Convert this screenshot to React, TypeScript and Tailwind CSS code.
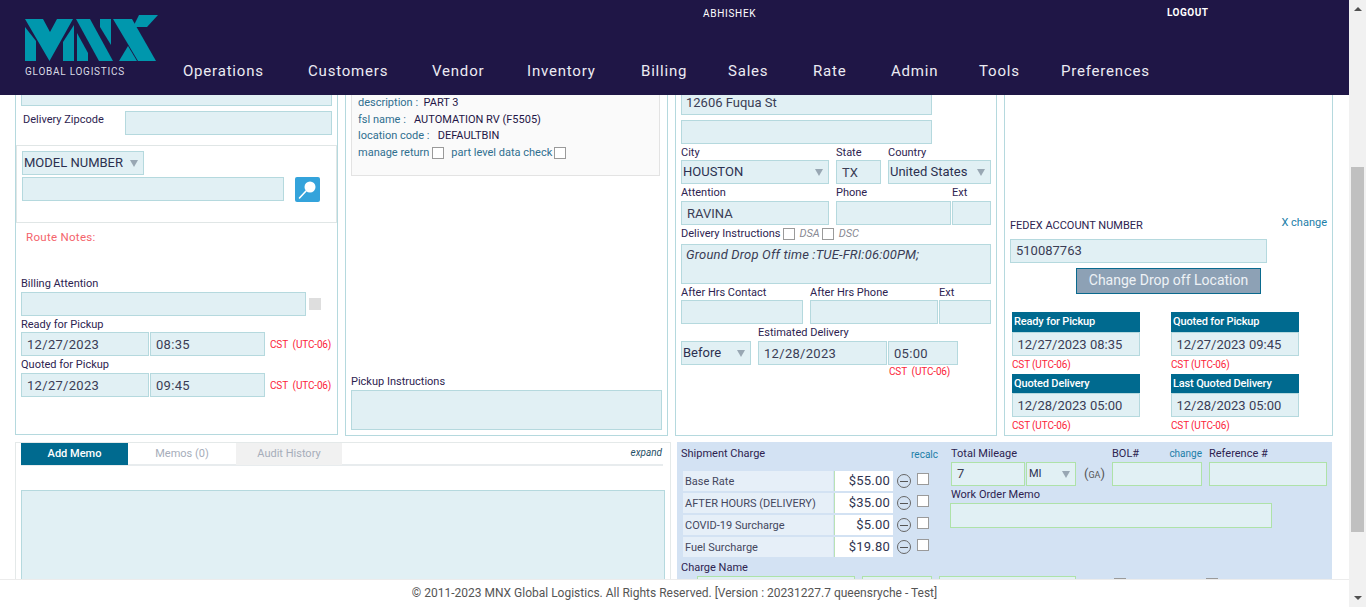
import React from 'react';

const sans = "font-['Roboto',sans-serif]";

type FieldProps = {
  value?: string;
  className?: string;
  green?: boolean;
  italic?: boolean;
};

const Field = ({ value, className = '', green, italic }: FieldProps) => (
  <div
    className={`shrink-0 h-6 border px-[5px] text-[13px] leading-[22px] text-[#3a3d55] overflow-hidden whitespace-nowrap ${
      green ? 'bg-[#e1f0f4] border-[#aee2a8]' : 'bg-[#e1f0f4] border-[#b5d9de]'
    } ${italic ? 'italic' : ''} ${className}`}
  >
    {value}
  </div>
);

const Select = ({ value, className = '', green }: FieldProps) => (
  <div
    className={`shrink-0 h-6 border pl-[1px] pr-[5px] flex items-center justify-between text-[13px] text-[#2c3050] bg-[#e1f0f4] ${
      green ? 'border-[#aee2a8]' : 'border-[#b5d9de]'
    } ${className}`}
  >
    <span>{value}</span>
    <span className="w-0 h-0 border-x-[4px] border-x-transparent border-t-[7px] border-t-[#98a7b3] mt-[1px]" />
  </div>
);

const Label = ({ children, className = '' }: { children: React.ReactNode; className?: string }) => (
  <div className={`text-[11px] leading-[13px] text-[#2d2350] whitespace-nowrap ${className}`}>{children}</div>
);

const Check = ({ className = '' }: { className?: string }) => (
  <span className={`inline-block shrink-0 w-3 h-3 bg-white border border-[#9a9a9a] ${className}`} />
);

const Zone = ({ className = '' }: { className?: string }) => (
  <div className={`text-[10px] leading-3 tracking-[-0.15px] text-[#fb2339] whitespace-nowrap ${className}`}>CST&nbsp; (UTC-06)</div>
);

const nav = [
  { label: 'Operations', width: 'w-[125px]' },
  { label: 'Customers', width: 'w-[124px]' },
  { label: 'Vendor', width: 'w-[95px]' },
  { label: 'Inventory', width: 'w-[114px]' },
  { label: 'Billing', width: 'w-[87px]' },
  { label: 'Sales', width: 'w-[85px]' },
  { label: 'Rate', width: 'w-[78px]' },
  { label: 'Admin', width: 'w-[88px]' },
  { label: 'Tools', width: 'w-[82px]' },
  { label: 'Preferences', width: 'w-auto' },
];

const Logo = () => (
  <div className="w-[135px] shrink-0">
    <svg width="135" height="47" viewBox="0 0 135 47" className="block">
      <g fill="#0097ad">
        <polygon points="0,12 11,26 11,46 0,46" />
        <polygon points="0,4 18,4 25,17 32,4 48,4 24.5,46" />
        <polygon points="38,27 49,10 49,46 38,46" />
        <polygon points="51,4 65,4 88,46 74,46" />
        <polygon points="52,18 63,38 63,46 52,46" />
        <polygon points="75,4 86,4 86,30 75,12" />
        <polygon points="88,4 107,4 131,46 113,46" />
        <polygon points="114,0 133,0 122,12 108,12" />
        <polygon points="94,46 103,31 112,46" />
      </g>
    </svg>
    <div className="text-[10px] leading-3 mt-[4px] tracking-[0.75px] text-[#d9dae4] whitespace-nowrap">GLOBAL LOGISTICS</div>
  </div>
);

const Header = () => (
  <header className="relative shrink-0 h-[95px] bg-[#1f1646] text-white flex items-start pl-[25px]">
    <div className="pt-[15px]">
      <Logo />
    </div>
    <nav className="flex pl-[23px] pt-[62px] text-[15px] leading-[18px] tracking-[0.8px] text-[#ecebf3]">
      {nav.map((item) => (
        <span key={item.label} className={item.width}>
          {item.label}
        </span>
      ))}
    </nav>
    <span className="absolute left-[703px] top-[8px] text-[10px] leading-3 tracking-[0.7px]">ABHISHEK</span>
    <span className="absolute left-[1167px] top-[7px] text-[10px] leading-3 tracking-[0.5px] font-bold">LOGOUT</span>
  </header>
);

const DeliveryPanel = () => (
  <section className="w-[323px] h-[340px] shrink-0 border-x border-b border-[#b5d9de] flex flex-col">
    <div className="px-[5px]">
      <Field className="!h-[11px] border-t-0 w-[311px]" />
      <div className="flex mt-[5px]">
        <Label className="w-[104px] pl-[2px] pt-[2px]">Delivery Zipcode</Label>
        <Field className="w-[207px]" />
      </div>
    </div>
    <div className="h-[78px] mt-[10px] border border-[#e0e6e6] px-[5px] pt-[5px]">
      <Select value="MODEL NUMBER" className="w-[122px]" />
      <div className="flex items-start mt-[2px]">
        <Field className="w-[262px]" />
        <button className="ml-[11px] w-[25px] h-[25px] rounded-[2px] bg-[#34a3db] flex items-center justify-center">
          <svg width="21" height="21" viewBox="0 0 21 21">
            <circle cx="13" cy="8" r="5.5" fill="#fff" />
            <path d="M9 12 L2.5 19" stroke="#fff" strokeWidth="1.6" strokeLinecap="round" />
          </svg>
        </button>
      </div>
    </div>
    <div className="text-[11.5px] leading-[14px] tracking-[0.3px] text-[#f4646c] pl-[10px] pt-[7px]">Route Notes:</div>
    <div className="px-[5px] mt-[33px]">
      <Label>Billing Attention</Label>
      <div className="flex items-center mt-[2px]">
        <Field className="w-[285px]" />
        <span className="w-3 h-3 ml-[3px] bg-[#dedede]" />
      </div>
      <Label className="mt-[2px]">Ready for Pickup</Label>
      <div className="flex items-center gap-[1px] mt-[1px]">
        <Field value="12/27/2023" className="w-[128px] pt-[1px] tracking-[0.3px]" />
        <Field value="08:35" className="w-[115px] pt-[1px] tracking-[0.3px]" />
        <Zone className="ml-[4px] mt-[1px]" />
      </div>
      <Label className="mt-[2px]">Quoted for Pickup</Label>
      <div className="flex items-center gap-[1px] mt-[2px]">
        <Field value="12/27/2023" className="w-[128px] pt-[1px] tracking-[0.3px]" />
        <Field value="09:45" className="w-[115px] pt-[1px] tracking-[0.3px]" />
        <Zone className="ml-[4px] mt-[1px]" />
      </div>
    </div>
  </section>
);

const PartPanel = () => (
  <section className="w-[323px] h-[341px] shrink-0 border-x border-b border-[#b5d9de] px-[5px] flex flex-col">
    <div className="w-[309px] h-[81px] bg-[#fafafa] border-x border-b border-[#e3e3e3] pl-[6px] text-[11px] leading-[16.5px] text-[#2f6f8f]">
      <div className="whitespace-nowrap">
        description :&nbsp; <span className="text-[#1f1646]">PART 3</span>
      </div>
      <div className="whitespace-nowrap">
        fsl name :&nbsp;&nbsp; <span className="text-[#1f1646]">AUTOMATION RV (F5505)</span>
      </div>
      <div className="whitespace-nowrap">
        location code :&nbsp;&nbsp; <span className="text-[#1f1646]">DEFAULTBIN</span>
      </div>
      <div className="flex items-center whitespace-nowrap">
        manage return
        <Check className="ml-[3px] mr-[7px]" />
        part level data check
        <Check className="ml-[2px]" />
      </div>
    </div>
    <Label className="mt-auto">Pickup Instructions</Label>
    <Field className="!h-10 w-[311px] mt-[2px] mb-[5px]" />
  </section>
);

const AddressPanel = () => (
  <section className="w-[322px] h-[341px] shrink-0 border-x border-b border-[#b5d9de] px-[5px]">
    <Field value="12606 Fuqua St" className="!h-5 border-t-0 w-[251px] !leading-[15px] !pl-[4px]" />
    <Field className="w-[251px] mt-[5px]" />
    <div className="flex mt-[2px] gap-[7px]">
      <div className="w-[148px]">
        <Label className="mb-[1px]">City</Label>
        <Select value="HOUSTON" className="w-[148px]" />
      </div>
      <div className="w-[45px]">
        <Label className="mb-[1px]">State</Label>
        <Field value="TX" className="w-[45px] pt-[1px]" />
      </div>
      <div className="w-[103px]">
        <Label className="mb-[1px]">Country</Label>
        <Select value="United States" className="w-[103px]" />
      </div>
    </div>
    <div className="flex mt-[2px]">
      <div className="w-[155px]">
        <Label className="mb-[2px]">Attention</Label>
        <Field value="RAVINA" className="w-[148px] pt-[1px]" />
      </div>
      <div className="w-[116px]">
        <Label className="mb-[2px]">Phone</Label>
        <Field className="w-[115px]" />
      </div>
      <div className="w-[39px]">
        <Label className="mb-[2px]">Ext</Label>
        <Field className="w-[39px]" />
      </div>
    </div>
    <div className="flex items-center h-[14px] mt-[2px] text-[11px] text-[#2d2350]">
      Delivery Instructions
      <Check className="ml-[3px] mr-[4px]" />
      <span className="italic text-[#8a8a94]">DSA</span>
      <Check className="ml-[2px] mr-[5px]" />
      <span className="italic text-[#8a8a94]">DSC</span>
    </div>
    <Field value="Ground Drop Off time :TUE-FRI:06:00PM;" italic className="!h-10 mt-[3px] w-[310px] !leading-[20px] !pl-[4px] tracking-[0.17px]" />
    <div className="flex mt-[2px]">
      <div className="w-[129px]">
        <Label className="mb-[1px]">After Hrs Contact</Label>
        <Field className="w-[122px]" />
      </div>
      <div className="w-[129px]">
        <Label className="mb-[1px]">After Hrs Phone</Label>
        <Field className="w-[128px]" />
      </div>
      <div className="w-[52px]">
        <Label className="mb-[1px]">Ext</Label>
        <Field className="w-[52px]" />
      </div>
    </div>
    <div className="flex mt-[2px]">
      <Select value="Before" className="w-[70px] mt-[15px]" />
      <div className="ml-[7px]">
        <Label className="mb-[2px]">Estimated Delivery</Label>
        <Field value="12/28/2023" className="w-[129px] pt-[1px] tracking-[0.3px]" />
      </div>
      <div className="ml-[1px] mt-[15px]">
        <Field value="05:00" className="w-[70px] pt-[1px] tracking-[0.3px]" />
        <Zone className="mt-[1px] ml-[1px]" />
      </div>
    </div>
  </section>
);

const DateBlock = ({ title, value, small }: { title: string; value: string; small?: boolean }) => (
  <div className="w-[128px]">
    <div className={`bg-[#006a8f] text-white text-[11px] font-medium tracking-[-0.15px] px-[2px] ${small ? 'h-[19px] leading-[19px]' : 'h-5 leading-5'}`}>
      {title}
    </div>
    <Field value={value} className="w-[128px] pl-[4.5px] pt-[1px]" />
    <div className="text-[10px] leading-3 text-[#fb2339] mt-[3px] tracking-[-0.15px]">CST (UTC-06)</div>
  </div>
);

const FedexPanel = () => (
  <section className="w-[329px] h-[341px] shrink-0 border-x border-b border-[#b5d9de] px-[5px] flex flex-col justify-end">
    <div className="flex justify-between items-start">
      <Label className="text-[10.5px] mt-[3px]">FEDEX ACCOUNT NUMBER</Label>
      <span className="text-[11px] leading-[13px] text-[#1c7ea8]">X change</span>
    </div>
    <Field value="510087763" className="w-[257px] mt-[7px]" />
    <button className="block ml-[66px] mt-[5px] w-[185px] h-[26px] bg-[#8da1b5] border border-[#0a6a8e] text-[#eef2f5] text-[14px] leading-[21px] pb-[1px]">
      Change Drop off Location
    </button>
    <div className="grid grid-cols-[128px_128px] gap-x-[31px] gap-y-[3px] pl-[2px] mt-[18px] mb-[3px]">
      <DateBlock title="Ready for Pickup" value="12/27/2023 08:35" />
      <DateBlock title="Quoted for Pickup" value="12/27/2023 09:45" />
      <DateBlock title="Quoted Delivery" value="12/28/2023 05:00" small />
      <DateBlock title="Last Quoted Delivery" value="12/28/2023 05:00" small />
    </div>
  </section>
);

const MemoPanel = () => (
  <section className="w-[656px] h-[200px] shrink-0 border border-[#e4e9e9] px-[5px]">
    <div className="flex h-[23px] border-b-2 border-[#e8ecee] w-[642px] text-[11px]">
      <div className="w-[107px] h-[22px] bg-[#006a8f] text-white font-medium flex items-center justify-center">Add Memo</div>
      <div className="w-[108px] h-[22px] text-[#a6adba] flex items-center justify-center">Memos (0)</div>
      <div className="w-[106px] h-[22px] bg-[#f1f1f1] text-[#a6adba] flex items-center justify-center">Audit History</div>
      <div className="ml-auto pr-[1px] italic text-[10px] text-[#1f4f66] leading-[20px]">expand</div>
    </div>
    <Field className="!h-[120px] w-[644px] mt-[24px]" />
  </section>
);

const charges = [
  ['Base Rate', '$55.00'],
  ['AFTER HOURS (DELIVERY)', '$35.00'],
  ['COVID-19 Surcharge', '$5.00'],
  ['Fuel Surcharge', '$19.80'],
];

const ChargePanel = () => (
  <section className="w-[655px] h-[200px] shrink-0 ml-[6px] bg-[#d3e2f3] pl-[4px] pt-[5px] flex">
    <div className="w-[268px] shrink-0">
      <div className="flex justify-between items-start pr-[11px] h-[14px]">
        <Label>Shipment Charge</Label>
        <span className="text-[10px] leading-[12px] mt-[2px] text-[#1c7ea8]">recalc</span>
      </div>
      <div className="mt-[10px] pl-[2px] flex flex-col gap-[2px]">
        {charges.map(([name, amount]) => (
          <div key={name} className="flex items-center h-5">
            <div className="w-[150px] h-5 bg-[#e6eff8] text-[11px] leading-[22px] pl-[2px] text-[#44475e] whitespace-nowrap">{name}</div>
            <div className="ml-[1px] w-[59px] h-5 bg-white border-l border-[#b9e2b4] text-[13px] leading-[19px] tracking-[0.2px] text-right pr-[3px] text-[#2f3450]">
              {amount}
            </div>
            <span className="ml-[4px] w-[14px] h-[14px] rounded-full border border-[#666] flex items-center justify-center">
              <span className="w-2 h-px bg-[#555]" />
            </span>
            <Check className="ml-[6px] mb-[4px]" />
          </div>
        ))}
      </div>
      <Label className="mt-[4px]">Charge Name</Label>
      <div className="flex ml-[16px] gap-[7px] mt-[2px]">
        <Field green className="w-[158px]" />
        <Field green className="w-[70px]" />
        <Field green className="w-[137px]" />
        <Check className="ml-[31px] mt-[2px]" />
        <Check className="ml-[73px] mt-[2px]" />
      </div>
    </div>
    <div className="pl-[2px]">
      <div className="flex">
        <div className="w-[161px]">
          <Label className="mb-[2px]">Total Mileage</Label>
          <div className="flex items-center gap-[1px]">
            <Field value="7" green className="w-[74px]" />
            <Select value="MI" green className="w-[50px] !text-[11px] !pl-[2px]" />
            <span className="ml-[7px] text-[13px] leading-4 text-[#555] whitespace-nowrap">
              (<span className="text-[9px]">GA</span>)
            </span>
          </div>
        </div>
        <div className="w-[97px]">
          <div className="flex justify-between items-end mb-[2px] w-[90px]">
            <Label>BOL#</Label>
            <span className="text-[10px] leading-3 text-[#1c7ea8]">change</span>
          </div>
          <Field green className="w-[90px]" />
        </div>
        <div>
          <Label className="mb-[2px]">Reference #</Label>
          <Field green className="w-[118px]" />
        </div>
      </div>
      <Label className="mt-[2px] mb-[2px]">Work Order Memo</Label>
      <Field green className="w-[322px] !h-[25px] ml-[-1px]" />
    </div>
  </section>
);

const App = () => {
  return (
    <div className={`${sans} w-[1366px] h-[607px] overflow-hidden flex bg-white`}>
      <div className="relative w-[1349px] h-[607px] flex flex-col">
        <Header />
        <main className="flex-1 overflow-hidden pl-[15px]">
          <div className="flex gap-[7px]">
            <DeliveryPanel />
            <PartPanel />
            <AddressPanel />
            <FedexPanel />
          </div>
          <div className="flex mt-[6px]">
            <MemoPanel />
            <ChargePanel />
          </div>
        </main>
        <footer className="absolute bottom-0 left-0 right-0 h-[28px] bg-white border-t border-[#ececec] text-center text-[12px] leading-[27px] text-[#555]">
          © 2011-2023 MNX Global Logistics. All Rights Reserved. [Version : 20231227.7 queensryche - Test]
        </footer>
      </div>
      <aside className="w-[17px] shrink-0 bg-[#f1f1f1] flex flex-col items-center">
        <div className="mt-[7px] w-0 h-0 border-x-[4px] border-x-transparent border-b-[4px] border-b-[#505050]" />
        <div className="mt-[156px] w-[13px] h-[365px] bg-[#c0c0c0]" />
        <div className="mt-auto mb-[7px] w-0 h-0 border-x-[4px] border-x-transparent border-t-[4px] border-t-[#505050]" />
      </aside>
    </div>
  );
};

export default App;
